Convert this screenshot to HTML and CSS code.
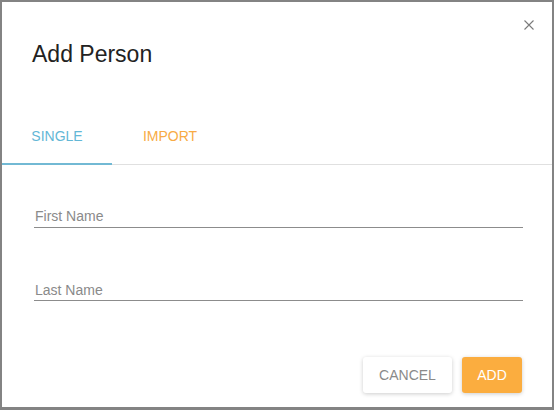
FILE: index.html
```html
<!DOCTYPE html>
<html>
<head>
<meta charset="utf-8">
<link rel="stylesheet" href="styles.css">
</head>
<body>
<div class="dialog">
  <button class="close" aria-label="Close">
    <svg width="10" height="10" viewBox="0 0 10 10"><path d="M0.5 0.5 L9.5 9.5 M9.5 0.5 L0.5 9.5" stroke="#7a7a7a" stroke-width="1.1" fill="none"/></svg>
  </button>
  <h1 class="title">Add Person</h1>
  <div class="tabs">
    <div class="tab tab-single active">SINGLE</div>
    <div class="tab tab-import">IMPORT</div>
  </div>
  <div class="fields">
    <div class="field field-first"><span class="label">First Name</span></div>
    <div class="field field-last"><span class="label">Last Name</span></div>
  </div>
  <div class="actions">
    <button class="btn btn-cancel">CANCEL</button>
    <button class="btn btn-add">ADD</button>
  </div>
</div>
</body>
</html>
```
FILE: styles.css
```css
html, body {
  margin: 0;
  padding: 0;
  background: #fff;
}
body {
  font-family: "Liberation Sans", Arial, sans-serif;
}
.dialog {
  position: relative;
  width: 554px;
  height: 410px;
  box-sizing: border-box;
  border: 2px solid #838383;
  border-bottom-width: 3px;
  background: #fff;
}
.close {
  position: absolute;
  left: 522px;
  top: 18px;
  width: 10px;
  height: 10px;
  padding: 0;
  border: 0;
  background: none;
  display: block;
}
.close svg { display: block; }
.title {
  margin: 38px 0 40px 30px;
  font-size: 23px;
  line-height: 28px;
  font-weight: normal;
  color: #222;
}
.tabs {
  display: flex;
  border-bottom: 1px solid #e0e0e0;
}
.tab {
  padding: 20px 0 19px;
  font-size: 14px;
  line-height: 16px;
  text-align: center;
  border-bottom: 2px solid transparent;
  margin-bottom: -1px;
}
.tab-single {
  width: 110px;
  color: #63b7d6;
}
.tab-single.active {
  border-bottom-color: #72b9d4;
}
.tab-import {
  width: 116px;
  color: #f8ab45;
}
.fields {
  padding: 43px 29px 0 32px;
}
.field {
  border-bottom: 1px solid #8c8c8c;
  padding-bottom: 3px;
}
.field-last {
  margin-top: 54px;
  padding-bottom: 2px;
}
.label {
  display: block;
  padding-left: 1px;
  font-size: 14px;
  line-height: 16px;
  color: #8a8a8a;
}
.actions {
  display: flex;
  justify-content: flex-end;
  gap: 10px;
  padding: 56px 30px 0 0;
}
.btn {
  height: 36px;
  border: 0;
  border-radius: 3px;
  font-family: "Liberation Sans", Arial, sans-serif;
  font-size: 14px;
  line-height: 16px;
  box-shadow: 0 1px 4px rgba(0, 0, 0, 0.2);
}
.btn-cancel {
  width: 89px;
  background: #fff;
  color: #8a8a8a;
}
.btn-add {
  width: 60px;
  background: #fbad3f;
  color: #fff;
}
```
